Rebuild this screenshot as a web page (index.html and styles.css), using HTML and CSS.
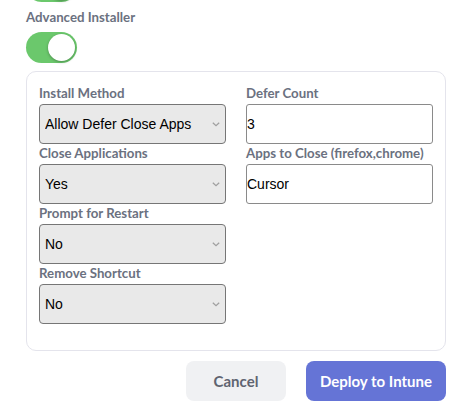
FILE: index.html
```html
<!DOCTYPE html>
<html>
<head>
<meta charset="utf-8">
<link rel="stylesheet" href="styles.css">
</head>
<body>
<div class="page">
  <div class="toggle toggle-prev"><span class="knob"></span></div>
  <div class="field-title">Advanced Installer</div>
  <div class="toggle"><span class="knob"></span></div>
  <div class="panel">
    <div class="col">
      <label class="lbl">Install Method</label>
      <select class="sel"><option>Allow Defer Close Apps</option></select>
      <label class="lbl">Close Applications</label>
      <select class="sel"><option>Yes</option></select>
      <label class="lbl">Prompt for Restart</label>
      <select class="sel"><option>No</option></select>
      <label class="lbl">Remove Shortcut</label>
      <select class="sel"><option>No</option></select>
    </div>
    <div class="col">
      <label class="lbl">Defer Count</label>
      <input class="inp" type="text" value="3">
      <label class="lbl">Apps to Close (firefox,chrome)</label>
      <input class="inp" type="text" value="Cursor">
    </div>
  </div>
  <div class="actions">
    <button class="btn btn-cancel">Cancel</button>
    <button class="btn btn-primary">Deploy to Intune</button>
  </div>
</div>
</body>
</html>
```
FILE: styles.css
```css
html, body {
  margin: 0;
  background: #ffffff;
}
body {
  font-family: Lato, "Liberation Sans", sans-serif;
}
.page {
  padding: 0 27px 0 26px;
}
.toggle {
  position: relative;
  width: 51px;
  height: 31px;
  border-radius: 16px;
  background: #6bc86c;
}
.toggle-prev {
  margin-top: -29px;
}
.knob {
  position: absolute;
  top: 2px;
  right: 2px;
  width: 27px;
  height: 27px;
  border-radius: 50%;
  background: #ffffff;
  box-shadow: 0 1px 3px rgba(0,0,0,0.3);
}
.field-title {
  margin-top: 6px;
  font-size: 13.25px;
  line-height: 18px;
  font-weight: 700;
  color: #6b7180;
  margin-bottom: 6px;
}
.panel {
  margin-top: 8px;
  border: 1px solid #e4e4ec;
  border-radius: 10px;
  padding: 12px 12px 26px 12px;
  display: grid;
  grid-template-columns: 1fr 1fr;
  column-gap: 20px;
  align-items: start;
}
.col {
  display: flex;
  flex-direction: column;
}
.lbl {
  font-size: 13.25px;
  line-height: 18px;
  font-weight: 700;
  color: #6b7180;
  margin-bottom: 2px;
  white-space: nowrap;
}
.sel {
  appearance: none;
  -webkit-appearance: none;
  height: 40px;
  box-sizing: border-box;
  border: 1px solid #767676;
  border-radius: 4px;
  background-color: #e9e9e9;
  background-image: url("data:image/svg+xml,%3Csvg xmlns='http://www.w3.org/2000/svg' width='8' height='5' viewBox='0 0 8 5'%3E%3Cpath d='M0.8 0.8 L4 3.8 L7.2 0.8' fill='none' stroke='%23a0a0a0' stroke-width='1.2'/%3E%3C/svg%3E");
  background-repeat: no-repeat;
  background-position: right 5px center;
  font-family: "Liberation Sans", Arial, sans-serif;
  font-size: 14px;
  color: #000;
  padding: 0 5px;
  margin: 0;
}
.inp {
  height: 40px;
  box-sizing: border-box;
  border: 1px solid #8a8a8a;
  border-radius: 3px;
  background: #fff;
  font-family: "Liberation Sans", Arial, sans-serif;
  font-size: 14px;
  color: #000;
  padding: 0;
  margin: 0;
  width: 100%;
}
.actions {
  display: flex;
  justify-content: flex-end;
  gap: 20px;
  margin-top: 10px;
}
.btn {
  height: 40px;
  border: none;
  border-radius: 8px;
  font-family: Lato, sans-serif;
  font-size: 15px;
  font-weight: 700;
  cursor: pointer;
}
.btn-cancel {
  width: 100px;
  background: #f0f1f3;
  color: #5f6470;
}
.btn-primary {
  width: 140px;
  background: #6574d6;
  color: #ffffff;
}
```
